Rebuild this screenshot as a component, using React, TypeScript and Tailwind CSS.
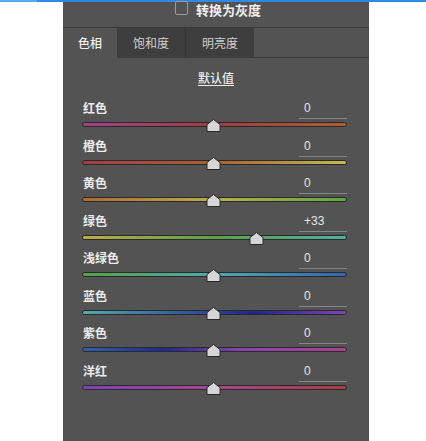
import React from "react";

type Row = { label: string; value: number; track: string };

const rows: Row[] = [
  { label: "红色", value: 0, track: "bg-[linear-gradient(to_right,#a0428a,#a43c40_50%,#aa5e30)]" },
  { label: "橙色", value: 0, track: "bg-[linear-gradient(to_right,#a43c4a,#aa6034_50%,#c2ba52)]" },
  { label: "黄色", value: 0, track: "bg-[linear-gradient(to_right,#ae6a34,#bcae48_50%,#5ca842)]" },
  { label: "绿色", value: 33, track: "bg-[linear-gradient(to_right,#bcac48,#5aa046_50%,#4eb0a2)]" },
  { label: "浅绿色", value: 0, track: "bg-[linear-gradient(to_right,#56a044,#4eaaac_50%,#3266b2)]" },
  { label: "蓝色", value: 0, track: "bg-[linear-gradient(to_right,#52aaa8,#2c4c9c_45%,#1a268a_65%,#8642b6)]" },
  { label: "紫色", value: 0, track: "bg-[linear-gradient(to_right,#3262ac,#1e2a8c_30%,#8842b0_60%,#aa428e)]" },
  { label: "洋红", value: 0, track: "bg-[linear-gradient(to_right,#7e42ba,#aa4492_50%,#aa3c40)]" },
];

function Thumb({ value }: { value: number }) {
  const pct = 50 + value / 2;
  return (
    <svg
      width="15"
      height="13"
      viewBox="0 0 15 13"
      className="absolute top-0 -ml-[9px]"
      style={{ left: `${pct}%` }}
    >
      <polygon
        points="7.5,0.5 14,5.5 14,12.5 1,12.5 1,5.5"
        fill="#d6d6d6"
        stroke="#2a2a2a"
        strokeWidth="1"
      />
    </svg>
  );
}

function SliderRow({ row }: { row: Row }) {
  return (
    <div className="h-[37.5px] pl-[19px] pr-[22px]">
      <div className="flex h-[21px] items-start justify-between">
        <span className="pl-px pt-px text-[12px] font-semibold leading-[18px] text-[#ececec]">{row.label}</span>
        <div className="h-[21px] w-[48px] border-b border-[#868686] pl-[5px] pt-px font-['Liberation_Sans',sans-serif] text-[12px] leading-[18px] text-[#e4e4e4]">
          {row.value > 0 ? `+${row.value}` : row.value}
        </div>
      </div>
      <div className="relative h-[13px]">
        <div className={`absolute left-0 right-0 top-[3px] h-[5px] rounded-full border border-[#2a2a2a] ${row.track}`} />
        <Thumb value={row.value} />
      </div>
    </div>
  );
}

export default function App() {
  return (
    <div className="h-[441px] w-[426px] overflow-hidden bg-white font-['Noto_Sans_CJK_SC',sans-serif]">
      <div className="flex h-[2px]">
        <div className="w-[37px] bg-[#5aa8ee]" />
        <div className="flex-1 bg-[#2f8be2]" />
      </div>
      <div className="ml-[63px] h-[439px] w-[306px] bg-[#535353]">
        <div className="flex h-[25px] items-start justify-center gap-[8px] pl-[4px]">
          <div className="-mt-px h-[14px] w-[13px] rounded-[2px] border border-[#9c9c9c]" />
          <span className="text-[13px] font-semibold leading-[15px] text-[#f0f0f0]">转换为灰度</span>
        </div>
        <div className="flex h-[31px] border-t border-[#3a3a3a] text-[12px]">
          <div className="flex w-[54px] items-center justify-center font-medium text-[#f2f2f2]">色相</div>
          <div className="flex w-[69px] items-center justify-center border-r border-[#363636] bg-[#3e3e3e] text-[#cfcfcf]">饱和度</div>
          <div className="flex w-[68px] items-center justify-center bg-[#3e3e3e] text-[#cfcfcf]">明亮度</div>
          <div className="flex-1 border-b border-[#3a3a3a] border-r border-r-[#4a4a4a]" />
        </div>
        <div className="mt-[12px] flex justify-center">
          <span className="text-[12px] font-medium leading-[16px] text-[#ececec] underline underline-offset-2">默认值</span>
        </div>
        <div className="mt-[12px]">
          {rows.map((r) => (
            <SliderRow key={r.label} row={r} />
          ))}
        </div>
      </div>
    </div>
  );
}
